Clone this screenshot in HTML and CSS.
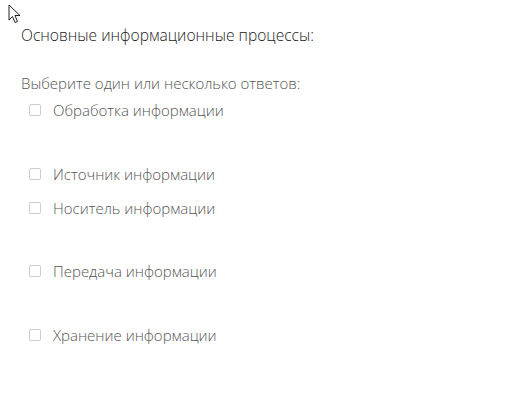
FILE: index.html
```html
<!DOCTYPE html>
<html lang="ru">
<head>
    <meta charset="UTF-8">
    <title>Вопрос</title>
    <link rel="stylesheet" href="styles.css">
</head>
<body>
    <svg class="cursor" width="14" height="20" viewBox="0 0 14 20">
        <path d="M1 1 L1 16 L4.5 12.5 L7 18.5 L9.5 17.5 L7 11.5 L12 11.5 Z" fill="#fff" stroke="#222" stroke-width="1" stroke-linejoin="miter"/>
    </svg>

    <div class="question">
        <p class="question-text">Основные информационные процессы:</p>
        <p class="prompt">Выберите один или несколько ответов:</p>

        <div class="answers">
            <label class="answer answer-spaced">
                <span class="box"></span>
                <span>Обработка информации</span>
            </label>
            <label class="answer">
                <span class="box"></span>
                <span>Источник информации</span>
            </label>
            <label class="answer answer-spaced">
                <span class="box"></span>
                <span>Носитель информации</span>
            </label>
            <label class="answer answer-spaced">
                <span class="box"></span>
                <span>Передача информации</span>
            </label>
            <label class="answer">
                <span class="box"></span>
                <span>Хранение информации</span>
            </label>
        </div>
    </div>
</body>
</html>
```

FILE: styles.css
```css
* {
    margin: 0;
    padding: 0;
    box-sizing: border-box;
}

body {
    font-family: 'Open Sans', sans-serif;
    font-weight: 300;
    background: #fff;
    color: #555;
    position: relative;
    width: 517px;
    height: 419px;
}

.cursor {
    position: absolute;
    left: 8px;
    top: 4px;
}

.question {
    padding: 25px 0 0 21px;
}

.question-text {
    font-size: 15.6px;
    line-height: 20px;
    color: #222;
}

.prompt {
    font-size: 15px;
    line-height: 20px;
    color: #555;
    margin-top: 28px;
}

.answers {
    display: flex;
    flex-direction: column;
    padding-left: 8px;
}

.answer {
    display: flex;
    align-items: center;
    gap: 12px;
    height: 34px;
    font-size: 15px;
    color: #555;
}

.answer-spaced {
    margin-bottom: 29.5px;
}

.box {
    width: 12px;
    height: 12px;
    border: 1px solid #ccc;
    border-radius: 2px;
    background: #fff;
}
```
